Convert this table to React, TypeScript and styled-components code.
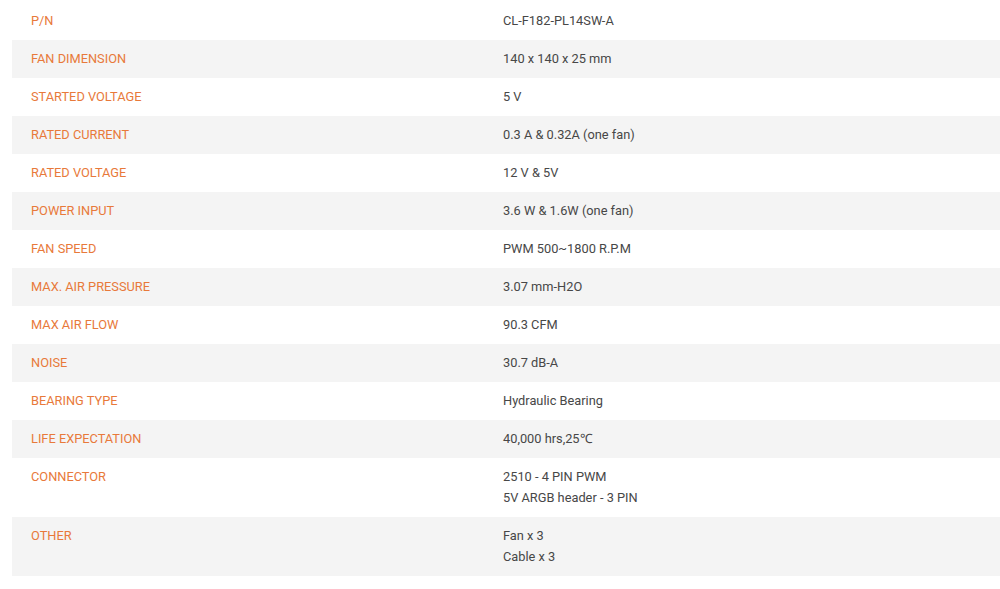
import React, { FC } from 'react';
import styled, { createGlobalStyle } from 'styled-components';

const GlobalStyle = createGlobalStyle`
  html, body {
    margin: 0;
    padding: 0;
    background: #fff;
  }
  body {
    font-family: Roboto, "Liberation Sans", Arial, sans-serif;
  }
`;

const SpecWrapper = styled.div`
  padding: 2px 0 0 12px;
  width: 1000px;
  box-sizing: border-box;
`;

const SpecTable = styled.div`
  display: flex;
  flex-direction: column;
  width: 100%;
`;

const SpecRow = styled.div<{ striped: boolean }>`
  display: grid;
  grid-template-columns: 472px 1fr;
  background: ${props => (props.striped ? '#f4f4f4' : '#fff')};
`;

const Cell = styled.div`
  padding: 8px 19px 9px;
  font-size: 12.8px;
  line-height: 21px;
`;

const Label = styled(Cell)`
  color: #e8793a;
  text-transform: uppercase;
`;

const Value = styled(Cell)`
  color: #474747;
`;

type Spec = { label: string; value: string[] };

const specs: Spec[] = [
  { label: 'P/N', value: ['CL-F182-PL14SW-A'] },
  { label: 'Fan Dimension', value: ['140 x 140 x 25 mm'] },
  { label: 'Started Voltage', value: ['5 V'] },
  { label: 'Rated Current', value: ['0.3 A & 0.32A (one fan)'] },
  { label: 'Rated Voltage', value: ['12 V & 5V'] },
  { label: 'Power Input', value: ['3.6 W & 1.6W (one fan)'] },
  { label: 'Fan Speed', value: ['PWM 500~1800 R.P.M'] },
  { label: 'Max. Air Pressure', value: ['3.07 mm-H2O'] },
  { label: 'Max Air Flow', value: ['90.3 CFM'] },
  { label: 'Noise', value: ['30.7 dB-A'] },
  { label: 'Bearing Type', value: ['Hydraulic Bearing'] },
  { label: 'Life Expectation', value: ['40,000 hrs,25\u2103'] },
  { label: 'Connector', value: ['2510 - 4 PIN PWM', '5V ARGB header - 3 PIN'] },
  { label: 'Other', value: ['Fan x 3', 'Cable x 3'] },
];

const App: FC = () => (
  <>
    <GlobalStyle />
    <SpecWrapper>
      <SpecTable>
        {specs.map((s, i) => (
          <SpecRow key={s.label} striped={i % 2 === 1}>
            <Label>{s.label}</Label>
            <Value>
              {s.value.map(line => (
                <div key={line}>{line}</div>
              ))}
            </Value>
          </SpecRow>
        ))}
      </SpecTable>
    </SpecWrapper>
  </>
);

export default App;
